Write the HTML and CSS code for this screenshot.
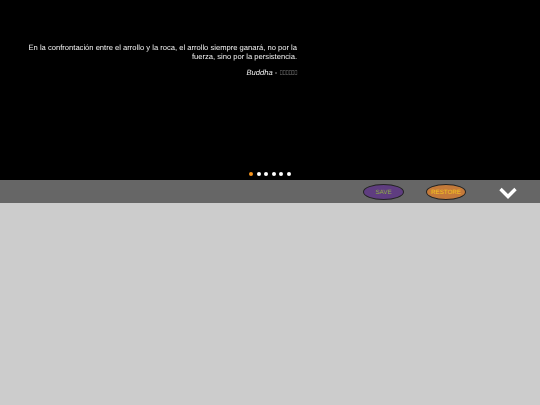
FILE: index.html
```html
<!DOCTYPE html>
<html lang="en">
<head>
    <meta charset="UTF-8">
    <title>Quotes</title>
    <link rel="stylesheet" href="styles.css">
</head>
<body>
    <div class="slider">
        <div class="quote">
            <p class="quote-text">En la confrontación entre el arrollo y la roca, el arrollo siempre ganará, no por la fuerza, sino por la persistencia.</p>
            <p class="quote-author"><em>Buddha</em> -<span class="tofu">&#xE000;&#xE001;&#xE002;&#xE003;&#xE004;&#xE005;</span></p>
        </div>
        <div class="dots">
            <span class="dot active"></span>
            <span class="dot"></span>
            <span class="dot"></span>
            <span class="dot"></span>
            <span class="dot"></span>
            <span class="dot"></span>
        </div>
    </div>
    <div class="toolbar">
        <button class="pill save">SAVE</button>
        <button class="pill restore">RESTORE</button>
        <button class="toggle">
            <svg xmlns="http://www.w3.org/2000/svg" width="18" height="12" viewBox="0 0 18 12" fill="none" stroke="white" stroke-width="3.4">
                <path d="M1.500 2l7.500 7.500L16.500 2"/>
            </svg>
        </button>
    </div>
    <div class="content"></div>
</body>
</html>
```

FILE: styles.css
```css
* {
    margin: 0;
    padding: 0;
    box-sizing: border-box;
    font-family: "Liberation Sans", Arial, sans-serif;
}

html, body {
    height: 100%;
}

body {
    display: flex;
    flex-direction: column;
    background-color: #ccc;
}

.slider {
    height: 180px;
    background-color: #000;
    color: #fff;
    display: flex;
    flex-direction: column;
    align-items: flex-start;
    position: relative;
}

.quote {
    width: 274px;
    margin: 43px 0 0 23px;
    text-align: right;
    font-size: 7.600px;
    line-height: 9px;
    text-rendering: geometricPrecision;
    will-change: transform;
    opacity: 0.95;
}

.quote-author {
    margin-top: 7px;
}

.tofu {
    display: inline-block;
    margin-left: -11.800px;
    font-size: 7px;
    white-space: nowrap;
    transform: scaleX(0.56);
    transform-origin: right center;
    opacity: 0.8;
}

.dots {
    position: absolute;
    left: 249px;
    top: 171.500px;
    display: flex;
    gap: 3.500px;
}

.dot {
    width: 4px;
    height: 4px;
    border-radius: 50%;
    background-color: #fff;
}

.dot.active {
    background-color: #f7941d;
}

.toolbar {
    height: 23px;
    background-color: #666;
    display: flex;
    align-items: center;
}

.pill {
    width: 41px;
    height: 16px;
    margin-top: 1px;
    border-radius: 50%;
    border: 1px solid #222;
    font-size: 6.200px;
    text-align: center;
    text-rendering: geometricPrecision;
}

.save {
    margin-left: 363px;
    background-color: #5f3d80;
    color: #8fae42;
}

.restore {
    width: 40px;
    margin-left: 22px;
    background-color: #c47a3a;
    color: #f7c51d;
}

.toggle {
    margin-left: 33px;
    border: none;
    background: none;
    display: flex;
    margin-top: 2px;
}

.content {
    flex: 1;
}
```
